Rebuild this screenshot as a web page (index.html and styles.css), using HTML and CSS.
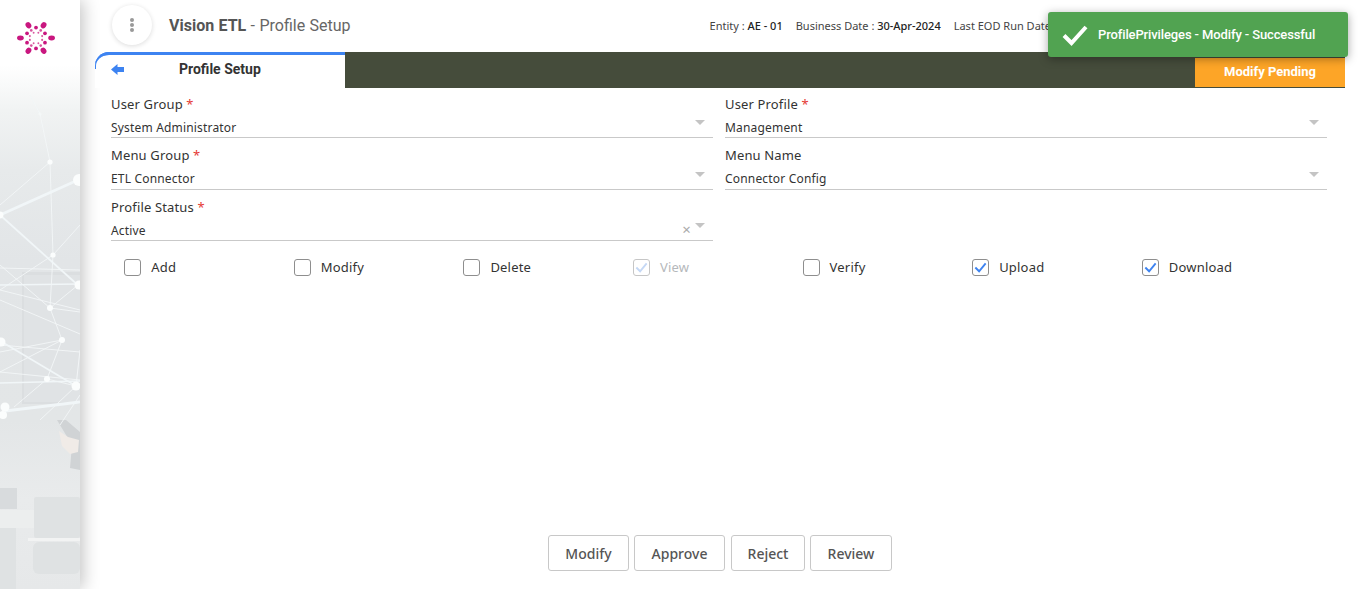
FILE: index.html
```html
<!DOCTYPE html>
<html lang="en">
<head>
    <meta charset="UTF-8">
    <title>Vision ETL - Profile Setup</title>
    <link rel="stylesheet" href="styles.css">
</head>
<body>
    <div class="app">
        <aside class="sidebar">
            <svg class="scene" viewBox="0 0 80 589">
                <rect class="room" x="22" y="272" width="58" height="132"/>
                <rect class="room-in" x="24" y="275" width="56" height="127"/>
                <rect class="desk-box" x="0" y="488" width="17" height="21"/>
                <rect class="desk-top" x="0" y="510" width="35" height="18"/>
                <rect class="desk-leg" x="0" y="528" width="16" height="61"/>
                <rect class="chair" x="34" y="497" width="46" height="41" rx="2"/>
                <rect class="chair-bar" x="28" y="538" width="52" height="3"/>
                <rect class="chair" x="33" y="542" width="47" height="32" rx="6"/>
                <path class="phone" d="M57 420 H66 L80 432 V470 L70 468 L72 445 Z"/>
                <path class="hand" d="M59 431 L68 437 L79 440 L78 452 L70 454 L62 446 Z"/>
                <g class="lines-thin">
                    <path d="M40 114 L50 162 L53 255 L50 308 L62 340 L47 379 L14 407"/>
                    <path d="M50 162 L0 205 M30 95 L40 114 M80 225 L53 255 L0 290"/>
                    <path d="M0 290 L80 310 M0 300 L80 334 M0 268 L80 270 M0 265 L50 308 L80 312"/>
                    <path d="M0 345 L80 352 M0 352 L62 340 M0 372 L80 380 M47 379 L76 386 L40 420"/>
                    <path d="M50 308 L78 285 M62 340 L0 372 M76 386 L80 350 M80 395 L60 425"/>
                </g>
                <g class="lines-thick">
                    <path d="M0 215 L78 180" stroke-width="2.6"/>
                    <path d="M0 215 L80 287" stroke-width="1.8"/>
                    <path d="M2 342 L76 386" stroke-width="1.8"/>
                    <path d="M0 285 L80 284" stroke-width="1.6"/>
                    <path d="M0 383 L80 381" stroke-width="1.4"/>
                    <path d="M5 411 L80 402" stroke-width="3"/>
                </g>
                <g class="nodes">
                    <circle cx="40" cy="114" r="1.8" opacity=".4"/>
                    <circle cx="50" cy="162" r="2.6"/>
                    <circle cx="79" cy="180" r="6"/>
                    <circle cx="0" cy="215" r="3.4"/>
                    <circle cx="53" cy="255" r="2.6"/>
                    <circle cx="79" cy="285" r="4.5"/>
                    <circle cx="50" cy="308" r="3"/>
                    <circle cx="62" cy="340" r="3"/>
                    <circle cx="1" cy="342" r="4.5"/>
                    <circle cx="47" cy="379" r="3"/>
                    <circle cx="76" cy="386" r="4.5"/>
                    <circle cx="5" cy="407" r="4.5"/>
                    <circle cx="3" cy="415" r="4"/>
                </g>
            </svg>
            <svg class="logo" viewBox="0 0 40 36">
                <g fill="#c9177f">
                    <ellipse cx="12" cy="4.5" rx="2.9" ry="3.4" transform="rotate(-35 12 4.5)"/>
                    <ellipse cx="28" cy="4.5" rx="2.9" ry="3.4" transform="rotate(35 28 4.5)"/>
                    <ellipse cx="3.5" cy="18" rx="3.6" ry="2.6"/>
                    <ellipse cx="36.5" cy="18" rx="3.6" ry="2.6"/>
                    <ellipse cx="12" cy="31.5" rx="2.9" ry="3.4" transform="rotate(35 12 31.5)"/>
                    <ellipse cx="28" cy="31.5" rx="2.9" ry="3.4" transform="rotate(-35 28 31.5)"/>
                    <circle cx="20" cy="7" r="2"/>
                    <circle cx="20" cy="29" r="2"/>
                    <circle cx="10.5" cy="13" r="2"/>
                    <circle cx="29.5" cy="13" r="2"/>
                    <circle cx="10.5" cy="23" r="2"/>
                    <circle cx="29.5" cy="23" r="2"/>
                </g>
                <g fill="#d9569f">
                    <circle cx="15" cy="10" r="1.4"/>
                    <circle cx="25" cy="10" r="1.4"/>
                    <circle cx="15" cy="26" r="1.4"/>
                    <circle cx="25" cy="26" r="1.4"/>
                    <circle cx="17.5" cy="12.5" r="1"/>
                    <circle cx="22.5" cy="12.5" r="1"/>
                    <circle cx="17.5" cy="23.5" r="1"/>
                    <circle cx="22.5" cy="23.5" r="1"/>
                    <circle cx="13.5" cy="16" r="1.1"/>
                    <circle cx="26.5" cy="16" r="1.1"/>
                    <circle cx="13.5" cy="20" r="1.1"/>
                    <circle cx="26.5" cy="20" r="1.1"/>
                </g>
            </svg>
        </aside>

        <main class="content">
            <header class="topbar">
                <button class="menu-btn" type="button">
                    <span></span><span></span><span></span>
                </button>
                <h1 class="app-title"><b>Vision ETL</b> - Profile Setup</h1>
                <div class="meta">
                    <span>Entity : <b>AE - 01</b></span>
                    <span>Business Date : <b>30-Apr-2024</b></span>
                    <span>Last EOD Run Date</span>
                </div>
            </header>

            <div class="tabbar">
                <div class="tab">
                    <svg class="back" viewBox="0 0 13 11"><path d="M0 5.5 L6.5 0 V3 H13 V8 H6.5 V11 Z"/></svg>
                    <span>Profile Setup</span>
                </div>
                <div class="tab-fill">
                    <div class="pending">Modify Pending</div>
                </div>
            </div>

            <form class="form">
                <div class="field">
                    <label>User Group <i>*</i></label>
                    <div class="select">System Administrator<em class="caret"></em></div>
                </div>
                <div class="field">
                    <label>User Profile <i>*</i></label>
                    <div class="select">Management<em class="caret"></em></div>
                </div>
                <div class="field">
                    <label>Menu Group <i>*</i></label>
                    <div class="select">ETL Connector<em class="caret"></em></div>
                </div>
                <div class="field">
                    <label>Menu Name</label>
                    <div class="select">Connector Config<em class="caret"></em></div>
                </div>
                <div class="field">
                    <label>Profile Status <i>*</i></label>
                    <div class="select">Active<u class="clear">×</u><em class="caret"></em></div>
                </div>
            </form>

            <div class="checks">
                <div class="check"><span class="box"></span>Add</div>
                <div class="check"><span class="box"></span>Modify</div>
                <div class="check"><span class="box"></span>Delete</div>
                <div class="check disabled"><span class="box"><svg viewBox="0 0 16 16"><path d="M2.5 8 L6.5 12 L13.5 3.5"/></svg></span>View</div>
                <div class="check"><span class="box"></span>Verify</div>
                <div class="check"><span class="box"><svg viewBox="0 0 16 16"><path d="M2.5 8 L6.5 12 L13.5 3.5"/></svg></span>Upload</div>
                <div class="check"><span class="box"><svg viewBox="0 0 16 16"><path d="M2.5 8 L6.5 12 L13.5 3.5"/></svg></span>Download</div>
            </div>

            <div class="actions">
                <button type="button" class="btn btn-modify">Modify</button>
                <button type="button" class="btn btn-approve">Approve</button>
                <button type="button" class="btn btn-reject">Reject</button>
                <button type="button" class="btn btn-review">Review</button>
            </div>
        </main>
    </div>

    <div class="toast">
        <svg viewBox="0 0 26 22"><path d="M2 11.5 L9.5 19 L24 3"/></svg>
        <span>ProfilePrivileges - Modify - Successful</span>
    </div>
</body>
</html>
```

FILE: styles.css
```css
* {
    box-sizing: border-box;
}

html, body {
    height: 100%;
}

body {
    margin: 0;
    overflow: hidden;
    background: #fff;
    color: #333;
    font-family: "Noto Sans", Arial, sans-serif;
    font-size: 13px;
}

.app {
    display: flex;
    height: 589px;
}

.sidebar {
    position: relative;
    flex: 0 0 80px;
    background: linear-gradient(to bottom, #fff 0, #fff 65px, #f1f3f3 110px, #e7eaeb 170px, #e2e5e7 260px, #e3e6e7 420px, #e9ebec 500px, #e6e8e9 589px);
    box-shadow: 3px 0 16px rgba(0, 0, 0, .24);
}

.scene {
    position: absolute;
    top: 0;
    left: 0;
    width: 80px;
    height: 589px;
    filter: blur(.5px);
}

.room { fill: #dbdee0; }
.room-in { fill: #e0e3e5; }
.desk-box { fill: #d8dbdd; }
.desk-top { fill: #eceeee; }
.desk-leg { fill: #dfe2e3; }
.chair { fill: #dfe2e3; }
.chair-bar { fill: #f2f3f3; }
.phone { fill: #d0d3d5; }
.hand { fill: #f0ebe7; }

.lines-thin {
    fill: none;
    stroke: #f3f6f7;
    stroke-width: .9;
}

.lines-thick {
    fill: none;
    stroke: #f1f6f8;
}

.nodes {
    fill: #fbfdfd;
}

.logo {
    position: absolute;
    top: 21px;
    left: 17px;
    width: 38px;
    height: 34px;
    filter: blur(.3px);
}

.content {
    flex: 1;
    display: flex;
    flex-direction: column;
    min-width: 0;
}

.topbar {
    display: flex;
    align-items: center;
    height: 52px;
    padding: 0 0 2px 32px;
    white-space: nowrap;
}

.menu-btn {
    display: flex;
    flex-direction: column;
    align-items: center;
    justify-content: center;
    gap: 1px;
    width: 40px;
    height: 40px;
    padding: 0;
    border: none;
    border-radius: 50%;
    background: #fff;
    box-shadow: 0 1px 5px rgba(0, 0, 0, .14);
}

.menu-btn span {
    width: 4px;
    height: 4px;
    border-radius: 50%;
    background: #999;
}

.app-title {
    margin: 0 0 0 17px;
    font-family: Roboto, Arial, sans-serif;
    font-size: 16px;
    font-weight: 400;
    word-spacing: .4px;
    color: #666;
}

.app-title b {
    font-weight: 700;
    color: #555;
}

.meta {
    display: flex;
    gap: 13px;
    margin-left: 359px;
    font-size: 11px;
    color: #444;
}

.meta b {
    font-weight: 500;
    color: #222;
}

.tabbar {
    display: flex;
    height: 36px;
    margin: 0 15px;
}

.tab {
    position: relative;
    display: flex;
    align-items: center;
    flex: 0 0 250px;
    height: 36px;
    padding: 0 0 5px 16px;
    border-top: 3px solid #3d83f1;
    border-top-left-radius: 14px;
    background: #fff;
    font-family: Roboto, Arial, sans-serif;
    font-size: 14px;
    font-weight: 700;
    color: #333;
}

/* the blue line runs on round the corner and thins out */
.tab::before {
    content: "";
    position: absolute;
    top: -3px;
    left: 0;
    width: 16px;
    height: 14px;
    border-top: 3px solid #3d83f1;
    border-left: 1.5px solid #3d83f1;
    border-top-left-radius: 14px;
}

.tab span {
    margin-left: 55px;
}

.back {
    width: 13px;
    height: 11px;
    fill: #3d83f1;
}

.tab-fill {
    flex: 1;
    display: flex;
    justify-content: flex-end;
    align-items: flex-end;
    background: #454c3b;
}

.pending {
    width: 150px;
    height: 29px;
    margin-bottom: 1px;
    background: #fda527;
    color: #fff;
    font-family: Roboto, Arial, sans-serif;
    font-size: 13px;
    font-weight: 700;
    line-height: 27px;
    text-align: center;
}

.form {
    display: grid;
    grid-template-columns: 602px 602px;
    column-gap: 12px;
    row-gap: 0;
    padding: 6.6px 0 0 31px;
}

.field {
    height: 51.5px;
}

.field label {
    display: block;
    height: 19px;
    line-height: 19px;
    letter-spacing: .15px;
    color: #333;
}

.field i {
    font-style: normal;
    color: #e53935;
}

.select {
    position: relative;
    height: 23.6px;
    margin-top: 1px;
    border-bottom: 1px solid #c9c9c9;
    font-size: 12px;
    letter-spacing: .18px;
    line-height: 25px;
    color: #333;
}

.caret {
    position: absolute;
    top: 5.5px;
    right: 8px;
    border-left: 5px solid transparent;
    border-right: 5px solid transparent;
    border-top: 5px solid #c4c4c4;
}

.clear {
    position: absolute;
    top: -1px;
    right: 22px;
    font-size: 15px;
    text-decoration: none;
    color: #aaa;
}

.checks {
    display: grid;
    grid-template-columns: repeat(7, 169.6px);
    padding: 8px 0 0 44.2px;
}

.check {
    display: flex;
    align-items: center;
    height: 20px;
    letter-spacing: .2px;
    color: #333;
}

.box {
    display: block;
    width: 17px;
    height: 17px;
    margin-right: 10px;
    border: 1px solid #8e8e8e;
    border-radius: 3px;
    background: #fff;
}

.box svg {
    display: block;
    width: 15px;
    height: 15px;
    fill: none;
    stroke: #3d83f1;
    stroke-width: 2;
}

.disabled {
    color: #b5b8bb;
}

.disabled .box {
    border-color: #c6c6c6;
}

.disabled .box svg {
    stroke: #c5d8f5;
}

.actions {
    display: flex;
    justify-content: flex-start;
    gap: 5px;
    margin-top: auto;
    padding: 0 0 18px 468px;
}

.btn {
    height: 36px;
    padding: 0;
    border: 1px solid #c8c8c8;
    border-radius: 3px;
    background: #fff;
    font-family: "Noto Sans", Arial, sans-serif;
    font-size: 14px;
    font-weight: 500;
    color: #555;
}

.btn-modify { width: 81px; }
.btn-approve { width: 91px; }
.btn-reject { width: 74px; margin-left: 1px; }
.btn-review { width: 82px; }

.toast {
    position: absolute;
    top: 12px;
    left: 1048px;
    display: flex;
    align-items: center;
    width: 300px;
    height: 45px;
    padding-left: 14px;
    border-radius: 3px;
    background: #51a351;
    box-shadow: 0 2px 10px rgba(0, 0, 0, .35);
    color: #fff;
    font-family: Roboto, Arial, sans-serif;
    font-size: 13px;
    font-weight: 500;
    letter-spacing: -.12px;
}

.toast svg {
    width: 26px;
    height: 22px;
    margin-right: 10px;
    fill: none;
    stroke: #fff;
    stroke-width: 4;
}
```
